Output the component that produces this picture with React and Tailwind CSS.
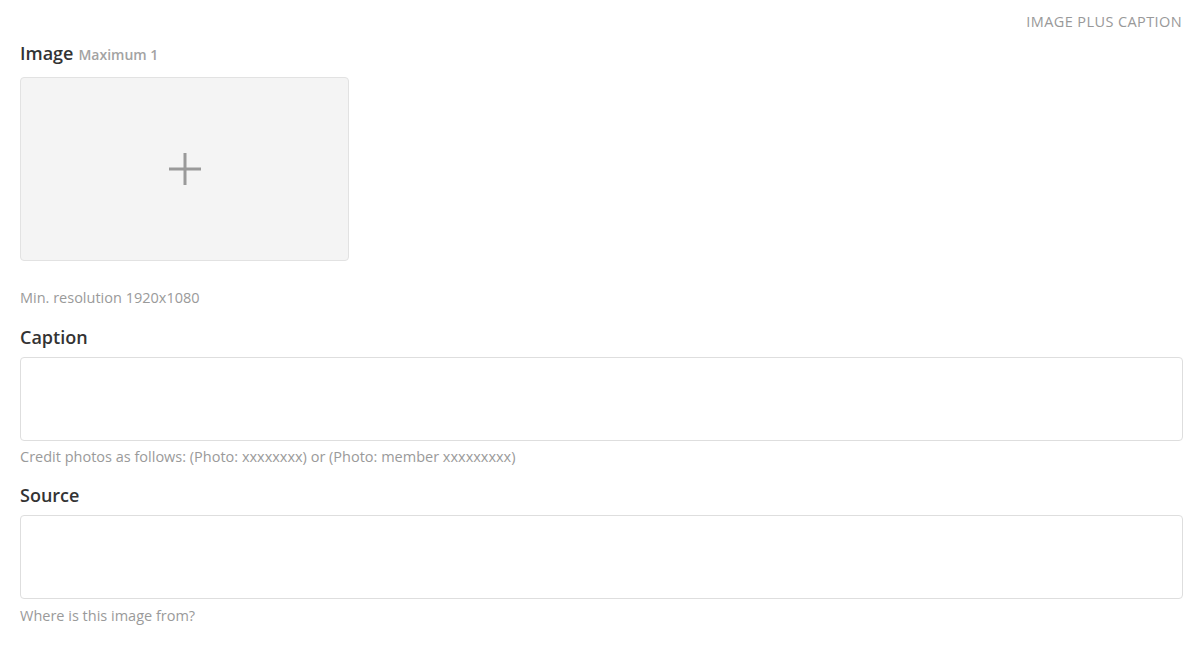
export default function App() {
  return (
    <div className="w-full min-h-[647px] bg-white px-5 font-['Open_Sans',sans-serif] text-[#333]">
      <div className="flex justify-end pt-[12px]">
        <span className="text-[14.5px] leading-[20px] uppercase tracking-[0.4px] text-[#999] -mr-[2px]">Image Plus Caption</span>
      </div>

      <div className="mt-[9px] flex items-baseline gap-[5px] leading-[24px]">
        <span className="text-[18px] font-semibold">Image</span>
        <span className="text-[14px] font-semibold text-[#a3a3a3]">Maximum 1</span>
      </div>

      <button
        type="button"
        className="mt-[10px] flex h-[184px] w-[329px] items-center justify-center rounded-[4px] border border-[#e2e2e2] bg-[#f4f4f4]"
      >
        <svg width="32" height="32" viewBox="0 0 32 32">
          <rect x="0" y="14.5" width="32" height="3" fill="#9a9a9a" />
          <rect x="14.5" y="0" width="3" height="32" fill="#9a9a9a" />
        </svg>
      </button>

      <p className="mt-[27px] text-[14.5px] leading-[20px] text-[#9a9a9a]">Min. resolution 1920x1080</p>

      <label className="mt-[17px] block text-[18px] leading-[24px] font-semibold">Caption</label>
      <textarea className="mt-[8px] block h-[84px] w-[1163px] resize-none rounded-[4px] border border-[#dedede] outline-none" />
      <p className="mt-[6px] text-[14.5px] leading-[20px] text-[#9a9a9a]">
        Credit photos as follows: (Photo: xxxxxxxx) or (Photo: member xxxxxxxxx)
      </p>

      <label className="mt-[16px] block text-[18px] leading-[24px] font-semibold">Source</label>
      <textarea className="mt-[8px] block h-[84px] w-[1163px] resize-none rounded-[4px] border border-[#dedede] outline-none" />
      <p className="mt-[7px] text-[14.5px] leading-[20px] text-[#9a9a9a]">Where is this image from?</p>
    </div>
  );
}
